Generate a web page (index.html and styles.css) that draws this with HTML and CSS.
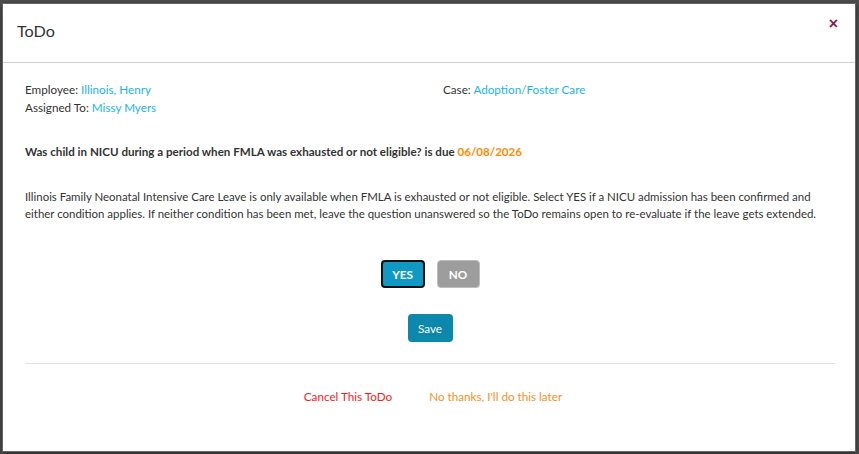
FILE: index.html
```html
<!DOCTYPE html>
<html lang="en">

<head>
    <meta charset="UTF-8">
    <meta name="viewport" content="width=device-width, initial-scale=1.0">
    <title>ToDo</title>
    <link rel="stylesheet" href="styles.css">
</head>

<body>
    <div class="overlay">
        <div class="modal">
            <div class="modal-header">
                <h4 class="modal-title">ToDo</h4>
                <button class="close" type="button">&times;</button>
            </div>

            <div class="modal-body">
                <div class="info">
                    <div>
                        <p>Employee: <a href="#">Illinois, Henry</a></p>
                        <p>Assigned To: <a href="#">Missy Myers</a></p>
                    </div>
                    <div>
                        <p>Case: <a href="#">Adoption/Foster Care</a></p>
                    </div>
                </div>

                <p class="question">Was child in NICU during a period when FMLA was exhausted or not eligible? is due <span class="due">06/08/2026</span></p>

                <p class="description">Illinois Family Neonatal Intensive Care Leave is only available when FMLA is exhausted or not eligible. Select YES if a NICU admission has been confirmed and either condition applies. If neither condition has been met, leave the question unanswered so the ToDo remains open to re-evaluate if the leave gets extended.</p>

                <div class="answers">
                    <button class="btn btn-yes" type="button">YES</button>
                    <button class="btn btn-no" type="button">NO</button>
                </div>

                <div class="save-row">
                    <button class="btn btn-save" type="button">Save</button>
                </div>

                <hr>

                <div class="footer-links">
                    <a href="#" class="cancel">Cancel This ToDo</a>
                    <a href="#" class="later">No thanks, I'll do this later</a>
                </div>
            </div>
        </div>
    </div>
</body>

</html>
```

FILE: styles.css
```css
html,
body {
    margin: 0;
    height: 100%;
}

body {
    font-family: Lato, "Open Sans", sans-serif;
    font-size: 11.7px;
    color: #333333;
    background-color: #4f4f4f;
}

.overlay {
    box-sizing: border-box;
    height: 100%;
    padding: 3px 3px 2px 2px;
}

.modal {
    box-sizing: border-box;
    height: 100%;
    background: #ffffff;
    border: 1px solid #666666;
    box-shadow: 0 2px 6px rgba(0, 0, 0, 0.5);
}

.modal-header {
    display: flex;
    justify-content: space-between;
    align-items: flex-start;
    height: 58px;
    padding: 0 17px 0 14px;
    border-bottom: 1px solid #cfcfcf;
}

.modal-title {
    margin: 16px 0 0;
    font-size: 16.2px;
    font-weight: normal;
    line-height: 22px;
}

.close {
    margin-top: 10px;
    padding: 0;
    border: none;
    background: none;
    font-family: Arial, sans-serif;
    font-size: 16px;
    font-weight: bold;
    line-height: 20px;
    color: #8b1c45;
    cursor: pointer;
}

.modal-body {
    padding: 17px 20px 0 22px;
}

a {
    color: #1bb3ef;
    text-decoration: none;
}

p {
    margin: 0;
    line-height: 18px;
}

.info {
    display: grid;
    grid-template-columns: 418px 1fr;
}

.question {
    margin-top: 27px;
    font-size: 11.6px;
    font-weight: bold;
}

.due {
    color: #ff8a00;
}

.description {
    margin-top: 27px;
    font-size: 11.45px;
    line-height: 17px;
}

.answers {
    display: flex;
    justify-content: center;
    gap: 12px;
    margin-top: 38px;
}

.btn {
    font-family: Lato, "Open Sans", sans-serif;
    font-size: 11.7px;
    font-weight: bold;
    color: #ffffff;
    border-radius: 4px;
    cursor: pointer;
}

.btn-yes {
    width: 44px;
    height: 28px;
    background: #0e9ac5;
    border: 2px solid #111111;
}

.btn-no {
    width: 43px;
    height: 28px;
    background: #9d9d9d;
    border: 1px solid #bdbdbd;
}

.save-row {
    display: flex;
    justify-content: center;
    margin-top: 26px;
}

.btn-save {
    width: 45px;
    height: 28px;
    background: #0b88ab;
    border: none;
    font-weight: normal;
}

hr {
    margin: 21px 0 0;
    border: none;
    border-top: 1px solid #e3e3e3;
}

.footer-links {
    display: flex;
    justify-content: center;
    gap: 37px;
    margin-top: 25px;
    padding-left: 6px;
}

.cancel {
    color: #f51c1c;
}

.later {
    color: #f7901e;
}
```
